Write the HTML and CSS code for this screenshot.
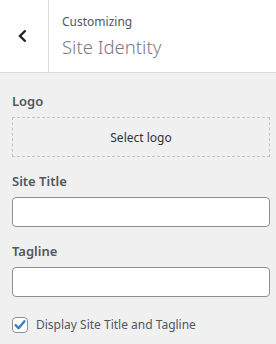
FILE: index.html
```html
<!DOCTYPE html>
<html>
<head>
<meta charset="utf-8">
<link rel="stylesheet" href="styles.css">
</head>
<body>
<div class="panel">
  <header class="head">
    <button class="back" aria-label="Back">
      <svg width="12" height="16" viewBox="0 0 12 16"><polyline points="8.5,2.5 3,8 8.5,13.5" fill="none" stroke="#1d2327" stroke-width="2.4" stroke-linecap="butt" stroke-linejoin="miter"/></svg>
    </button>
    <div class="titles">
      <div class="sub">Customizing</div>
      <div class="title">Site Identity</div>
    </div>
  </header>
  <main class="body">
    <div class="control">
      <div class="label">Logo</div>
      <div class="dropzone">Select logo</div>
    </div>
    <div class="control">
      <div class="label">Site Title</div>
      <div class="input"></div>
    </div>
    <div class="control">
      <div class="label">Tagline</div>
      <div class="input"></div>
    </div>
    <label class="check">
      <span class="box">
        <svg width="16" height="16" viewBox="0 0 16 16"><polyline points="3.6,8.2 6.6,11.2 12.4,4.2" fill="none" stroke="#3582c4" stroke-width="2.4" stroke-linecap="round" stroke-linejoin="round"/></svg>
      </span>
      <span class="check-text">Display Site Title and Tagline</span>
    </label>
  </main>
</div>
</body>
</html>
```
FILE: styles.css
```css
* { box-sizing: border-box; }
html, body { margin: 0; padding: 0; }
body {
  width: 276px;
  height: 344px;
  background: #f0f0f1;
  font-family: "Noto Sans", "Open Sans", sans-serif;
  color: #50575e;
  overflow: hidden;
}
.head {
  display: flex;
  height: 73px;
  background: #fff;
  border-bottom: 1px solid #dcdcde;
}
.back {
  width: 49px;
  height: 72px;
  border: 0;
  border-right: 1px solid #dcdcde;
  background: #fff;
  padding: 0;
  display: flex;
  align-items: center;
  justify-content: center;
  padding-right: 2px;
}
.titles {
  padding: 13px 0 0 13px;
}
.sub {
  font-size: 12px;
  line-height: 18px;
  color: #50575e;
}
.title {
  font-size: 18.5px;
  line-height: 28px;
  font-weight: 300;
  color: #787c82;
  margin-top: 2px;
}
.body {
  padding: 18px 6px 0 12px;
}
.control { margin-bottom: 14px; }
.label {
  font-size: 13px;
  font-weight: 600;
  line-height: 20px;
  color: #50575e;
  margin-bottom: 6px;
}
.dropzone {
  height: 40px;
  border: 1px dashed #c3c4c7;
  display: flex;
  align-items: center;
  justify-content: center;
  font-size: 12px;
  color: #2c3338;
}
.input {
  height: 30px;
  background: #fff;
  border: 1px solid #8c8f94;
  border-radius: 4px;
}
.check {
  display: flex;
  align-items: center;
  margin-top: 20px;
  gap: 8px;
}
.box {
  width: 16px;
  height: 16px;
  background: #fff;
  border: 1px solid #8c8f94;
  border-radius: 4px;
  position: relative;
  flex: none;
}
.box svg { position: absolute; left: -1px; top: -1px; }
.check-text {
  font-size: 12px;
  line-height: 16px;
  color: #50575e;
}
```
